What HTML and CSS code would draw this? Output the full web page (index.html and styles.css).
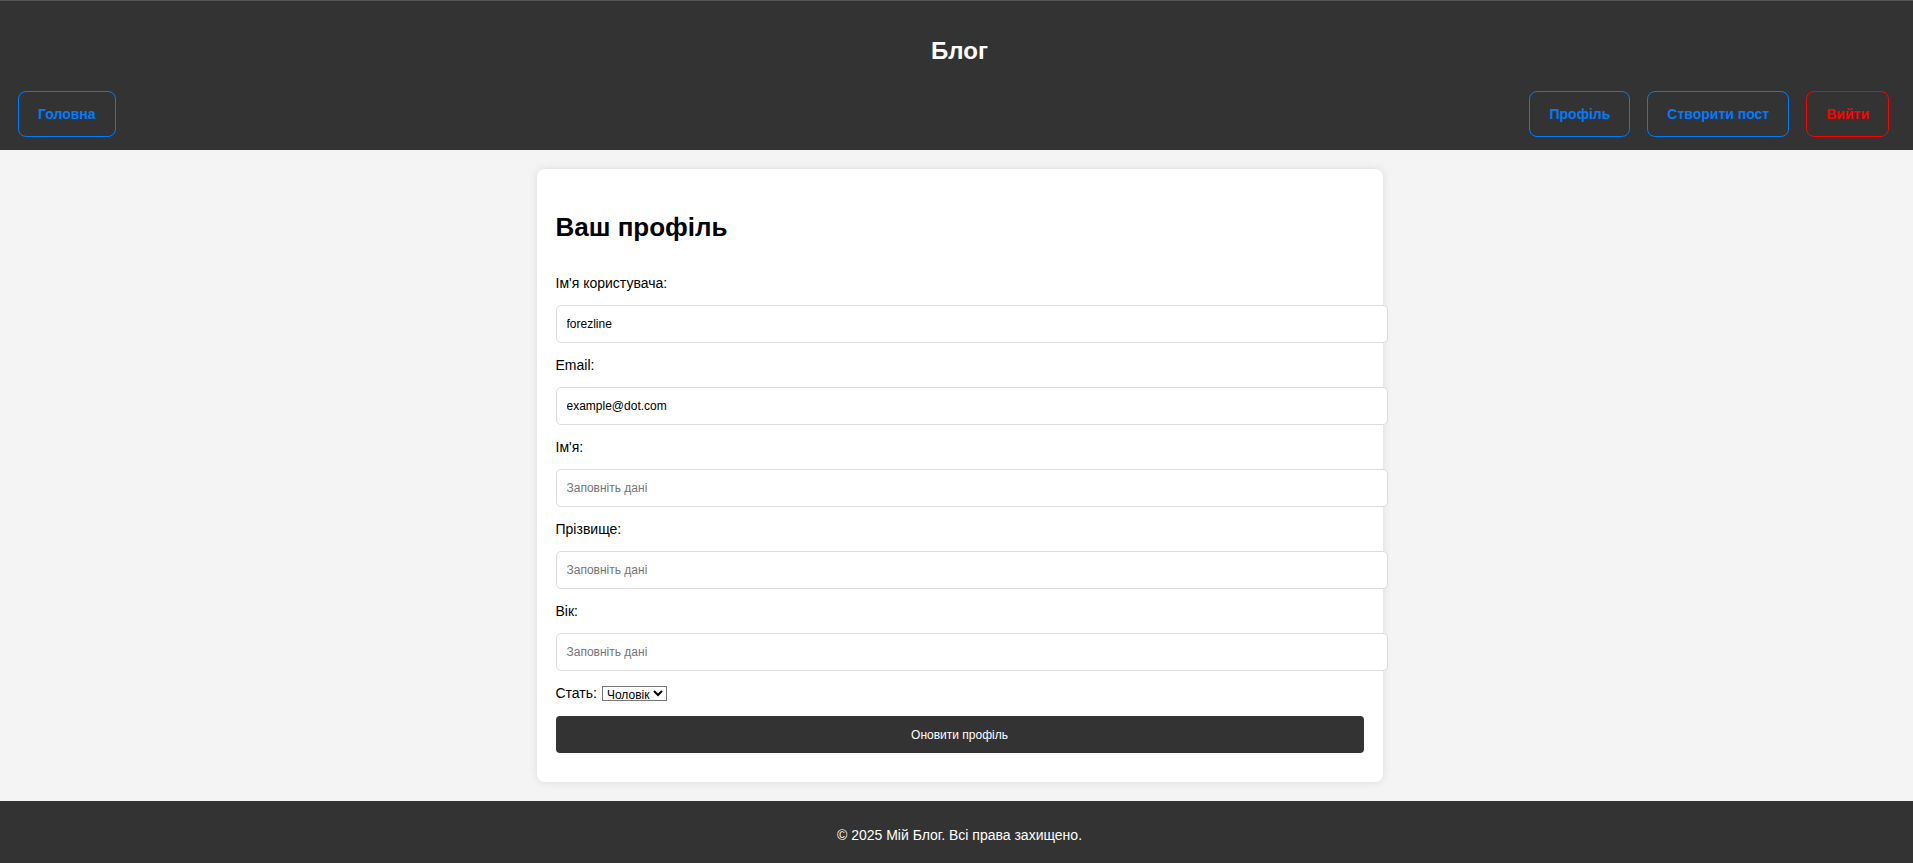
FILE: index.html
```html
<!DOCTYPE html>
<html lang="uk">
<head>
<meta charset="utf-8">
<title>Блог</title>
<link rel="stylesheet" href="styles.css">
</head>
<body>
<header class="site-header">
  <h1 class="site-title">Блог</h1>
  <nav class="nav">
    <a class="nav-btn" href="#">Головна</a>
    <div class="nav-right">
      <a class="nav-btn" href="#">Профіль</a>
      <a class="nav-btn" href="#">Створити пост</a>
      <a class="nav-btn nav-btn-danger" href="#">Вийти</a>
    </div>
  </nav>
</header>
<main class="main">
  <section class="card">
    <h2 class="card-title">Ваш профіль</h2>
    <form class="profile-form">
      <label class="field-label" for="username">Ім'я користувача:</label>
      <input class="field-input" id="username" type="text" value="forezline">
      <label class="field-label" for="email">Email:</label>
      <input class="field-input" id="email" type="email" value="example@dot.com">
      <label class="field-label" for="fname">Ім'я:</label>
      <input class="field-input" id="fname" type="text" placeholder="Заповніть дані">
      <label class="field-label" for="lname">Прізвище:</label>
      <input class="field-input" id="lname" type="text" placeholder="Заповніть дані">
      <label class="field-label" for="age">Вік:</label>
      <input class="field-input" id="age" type="text" placeholder="Заповніть дані">
      <div class="gender-row">
        <label for="gender">Стать:</label>
        <select class="gender-select" id="gender">
          <option>Чоловік</option>
          <option>Жінка</option>
        </select>
      </div>
      <button class="submit-btn" type="button">Оновити профіль</button>
    </form>
  </section>
</main>
<footer class="site-footer">
  <p class="footer-text">© 2025 Мій Блог. Всі права захищено.</p>
</footer>
</body>
</html>
```
FILE: styles.css
```css
* {
  box-sizing: border-box;
}

html, body {
  margin: 0;
  padding: 0;
}

body {
  background: #f4f4f4;
  font-family: "Liberation Sans", Arial, sans-serif;
  font-size: 14px;
  line-height: 16px;
  color: #000;
}

.site-header {
  background: #333;
  border-top: 1px solid #555;
  padding: 0 24px 13px 18px;
}

.site-title {
  margin: 0;
  padding: 36px 0 0 12px;
  text-align: center;
  color: #fff;
  font-size: 24px;
  line-height: 28px;
  font-weight: bold;
}

.nav {
  display: flex;
  justify-content: space-between;
  align-items: center;
  margin-top: 26px;
}

.nav-right {
  display: flex;
  gap: 17px;
}

.nav-btn {
  display: inline-block;
  padding: 14px 19px;
  border: 1px solid #007bff;
  border-radius: 8px;
  color: #007bff;
  font-size: 14px;
  line-height: 16px;
  font-weight: bold;
  text-decoration: none;
}

.nav-btn-danger {
  border-color: #ff0000;
  color: #ff0000;
}

.main {
  padding: 19px 0 19px 6px;
}

.card {
  width: 846px;
  margin: 0 auto;
  background: #fff;
  border-radius: 8px;
  box-shadow: 0 0 10px rgba(0, 0, 0, 0.1);
  padding: 19px 19px 29px;
}

.card-title {
  margin: 25px 0 34px;
  font-size: 26px;
  line-height: 28px;
  font-weight: bold;
}

.profile-form {
  display: flex;
  flex-direction: column;
  align-items: flex-start;
}

.field-label {
  display: block;
  height: 16px;
}

.field-input {
  display: block;
  width: calc(100% + 24px);
  height: 38px;
  margin: 14px 0;
  padding: 0 10px;
  border: 1px solid #ddd;
  border-radius: 5px;
  font-family: "Liberation Sans", Arial, sans-serif;
  font-size: 12px;
  color: #000;
  background: #fff;
}

.field-input::placeholder {
  color: #757575;
}

.gender-row {
  display: flex;
  align-items: center;
  gap: 5px;
  height: 16px;
  margin-bottom: 15px;
}

.gender-select {
  height: 15px;
  padding: 0;
  font-family: "Liberation Sans", Arial, sans-serif;
  font-size: 12px;
  color: #000;
  border: 1px solid #767676;
  border-radius: 0;
  background: #fff;
}

.submit-btn {
  width: 100%;
  height: 37px;
  border: none;
  border-radius: 4px;
  background: #333;
  color: #fff;
  font-family: "Liberation Sans", Arial, sans-serif;
  font-size: 12px;
}

.site-footer {
  background: #333;
  color: #fff;
  text-align: center;
  padding: 26px 0 20px 6px;
}

.footer-text {
  margin: 0;
  font-size: 14px;
  line-height: 16px;
}
```
